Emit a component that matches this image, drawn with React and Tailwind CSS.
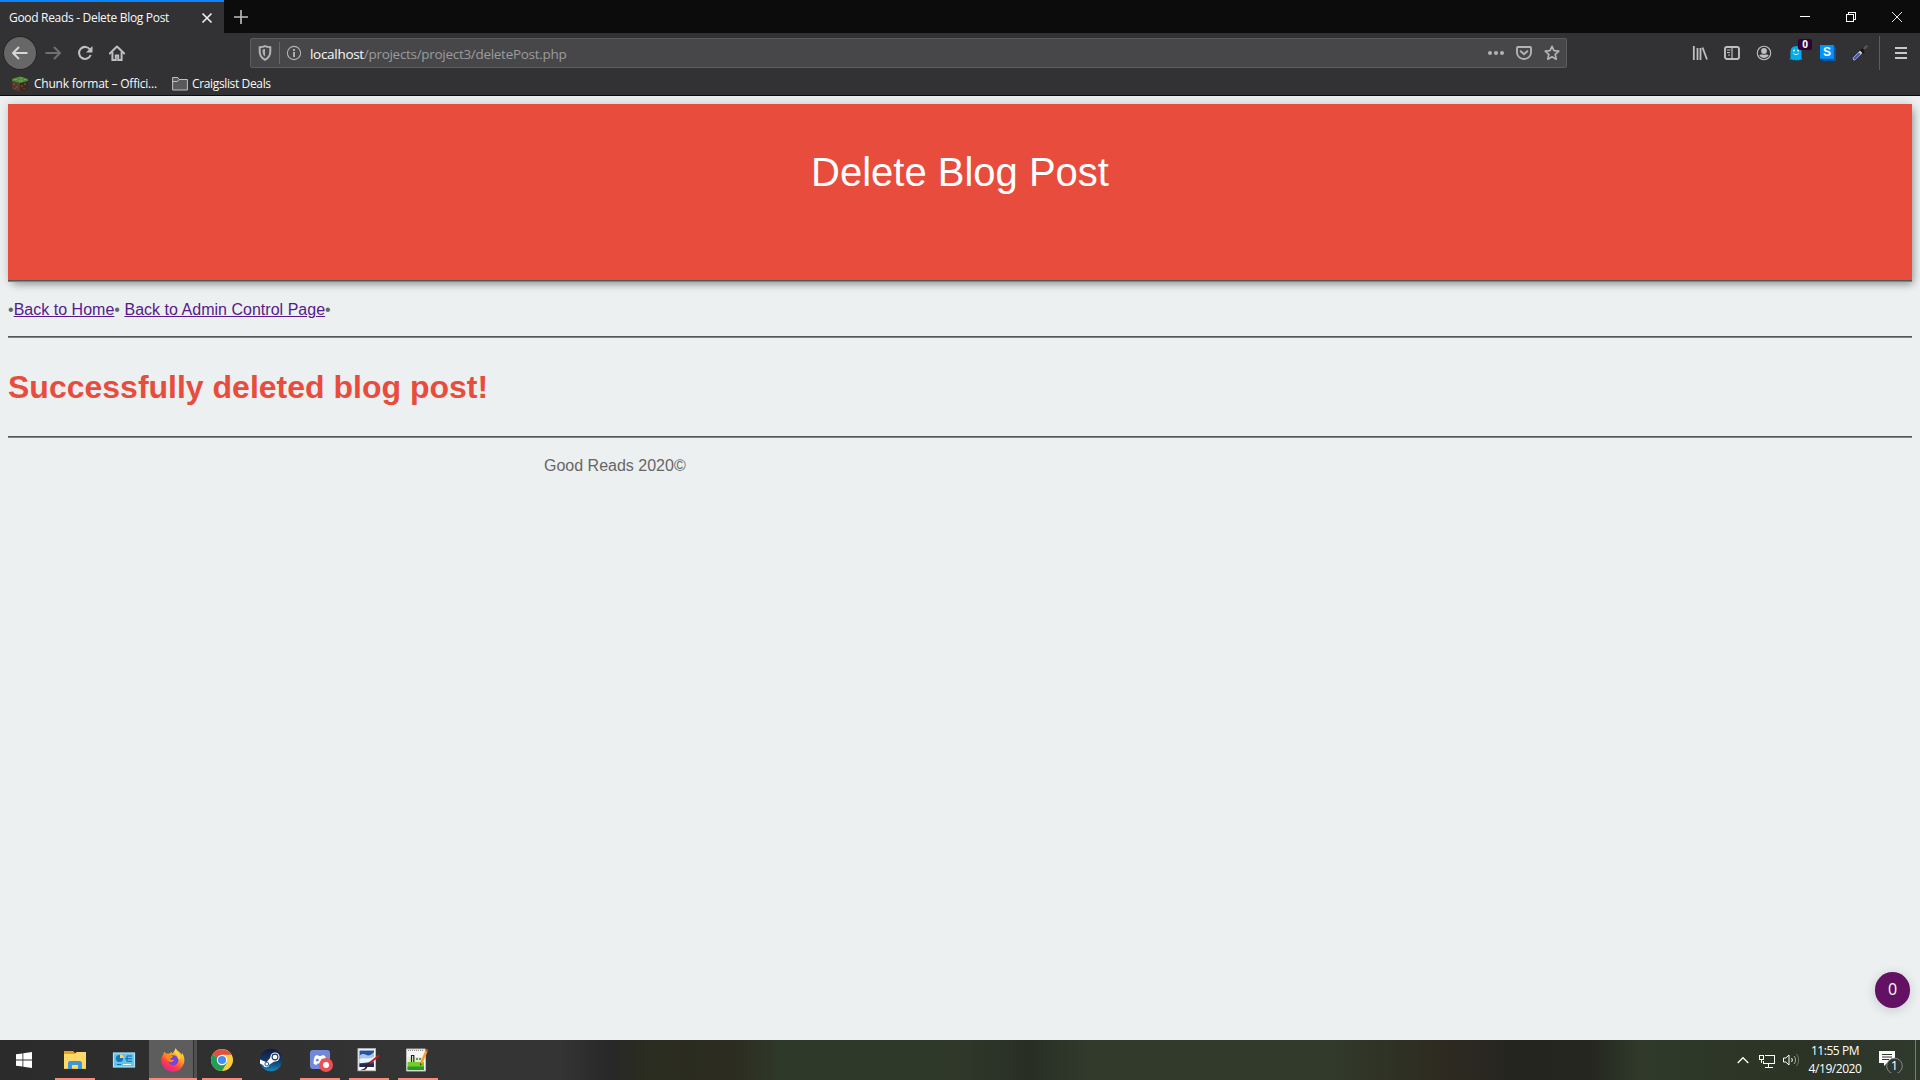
import React from "react";

const Svg = ({ size = 16, className = "", children, ...rest }) => (
  <svg width={size} height={size} viewBox="0 0 16 16" fill="none" className={`block shrink-0 ${className}`} {...rest}>
    {children}
  </svg>
);

const Slot = ({ children }) => (
  <div className="flex h-8 w-8 shrink-0 items-center justify-center text-[#bfbfc0]">{children}</div>
);

function TabStrip() {
  return (
    <div className="flex h-[33px] bg-[#0c0c0d]">
      <div className="flex w-[224px] items-center justify-between border-t-2 border-[#0a84ff] bg-[#323234] pr-[11px] pl-[9px]">
        <span className="text-[12px] leading-4 tracking-[-0.31px] whitespace-nowrap text-[#f9f9fa]">Good Reads - Delete Blog Post</span>
        <Svg size={12} className="text-[#f0f0f0]">
          <path d="M2 2l12 12M14 2L2 14" stroke="currentColor" strokeWidth="2.2" />
        </Svg>
      </div>
      <div className="ml-[9px] flex w-4 items-center">
        <Svg className="text-[#c0c0c1]">
          <path d="M8 1v14M1 8h14" stroke="currentColor" strokeWidth="1.6" />
        </Svg>
      </div>
      <div className="ml-auto flex text-white">
        <div className="flex w-[46px] items-center justify-center">
          <div className="h-px w-2.5 bg-white" />
        </div>
        <div className="flex w-[46px] items-center justify-center">
          <svg width="10" height="10" fill="none" stroke="currentColor" shapeRendering="crispEdges" className="block">
            <path d="M.5 2.5h7v7h-7zM2.5 2.5v-2h7v7h-2" />
          </svg>
        </div>
        <div className="flex w-[46px] items-center justify-center">
          <svg width="10" height="10" stroke="currentColor" className="block">
            <path d="M0 0l10 10M10 0L0 10" strokeWidth="0.9" />
          </svg>
        </div>
      </div>
    </div>
  );
}

function UrlBar() {
  return (
    <div className="ml-[117px] flex h-[30px] w-[1317px] items-center rounded-[2px] border border-[#5c5c5e] bg-[#474749] text-[#b3b3b4]">
      <Svg className="ml-[6px]">
        <path d="M8 1.2c2 .9 3.700 1 5.300 1v4.300c0 4-1.800 6.500-5.300 8.300C4.500 13 2.700 10.500 2.700 6.500V2.200c1.600 0 3.300-.1 5.300-1z" stroke="currentColor" strokeWidth="2" />
        <path d="M8 4v7.500C6.300 10.300 5.600 8.800 5.600 6.500V4.600z" fill="currentColor" />
      </Svg>
      <div className="ml-[6px] h-[22px] w-px bg-[#69696b]" />
      <Svg className="ml-[6px]">
        <circle cx="8" cy="8" r="6.600" stroke="currentColor" strokeWidth="1.100" />
        <path d="M8 7v5M8 4v2" stroke="currentColor" strokeWidth="1.900" />
      </Svg>
      <div className="ml-[8px] pt-[2px] text-[13.5px] leading-5 tracking-[-0.3px] whitespace-nowrap text-[#9b9b9c]">
        <span className="text-[#f9f9fa]">localhost</span>/projects/project3/deletePost.php
      </div>
      <div className="mr-[6px] ml-auto flex gap-3">
        <Svg>
          <g fill="currentColor">
            <circle cx="2" cy="8" r="2" />
            <circle cx="8" cy="8" r="2" />
            <circle cx="14" cy="8" r="2" />
          </g>
        </Svg>
        <Svg>
          <path d="M1.900 2h12.200c.5 0 .9.4.9.9v4.600a7 6.500 0 0 1-14 0V2.900c0-.5.4-.9.9-.9z" stroke="currentColor" strokeWidth="1.900" />
          <path d="M4.700 6.200L8 9.300l3.300-3.100" stroke="currentColor" strokeWidth="1.900" strokeLinecap="round" />
        </Svg>
        <Svg>
          <path d="M8 1.300l2 4.400 4.800.5-3.600 3.200 1 4.800L8 11.800l-4.200 2.400 1-4.800L1.200 6.200 6 5.700z" stroke="currentColor" strokeWidth="1.700" strokeLinejoin="round" />
        </Svg>
      </div>
    </div>
  );
}

function NavBar() {
  return (
    <div className="flex h-10 items-center bg-[#323234] pl-1">
      <div className="flex h-8 w-8 items-center justify-center rounded-full bg-[#676768] text-[#d6d6d7] shadow-[0_0_0_1px_#282829]">
        <Svg>
          <path d="M15.500 8H1.500M7 2L1 8l6 6" stroke="currentColor" strokeWidth="2" strokeLinejoin="round" />
        </Svg>
      </div>
      <div className="ml-px flex h-8 w-8 items-center justify-center text-[#707071]">
        <Svg>
          <path d="M.5 8h14M9 2l6 6-6 6" stroke="currentColor" strokeWidth="2" strokeLinejoin="round" />
        </Svg>
      </div>
      <Slot>
        <Svg>
          <path d="M13 4.500A6 6 0 1 0 13.700 10" stroke="currentColor" strokeWidth="2.100" />
          <path d="M15.500 1v6.500H9z" fill="currentColor" />
        </Svg>
      </Slot>
      <Slot>
        <Svg>
          <path d="M.8 8.500L8 1.500l7.200 7" stroke="currentColor" strokeWidth="2" strokeLinejoin="round" strokeLinecap="round" />
          <path d="M3.400 7v7.900h3.400V10.500h2.400v4.400h3.400V7" stroke="currentColor" strokeWidth="2" />
        </Svg>
      </Slot>
      <UrlBar />
      <div className="ml-[117px] flex">
        <Slot>
          <Svg>
            <path d="M1.800 1v14M5.500 3v12M8.500 3v12" stroke="currentColor" strokeWidth="1.800" />
            <path d="M10.500 2.500l4.500 12" stroke="currentColor" strokeWidth="1.800" />
          </Svg>
        </Slot>
        <Slot>
          <Svg>
            <rect x="1" y="2" width="14" height="12" rx="2" stroke="currentColor" strokeWidth="1.900" />
            <path d="M8 2v12M3 5h3.500M3 7.500h3M4 10h2" stroke="currentColor" strokeWidth="1.200" />
          </Svg>
        </Slot>
        <Slot>
          <Svg>
            <circle cx="8" cy="8" r="6.700" stroke="currentColor" strokeWidth="1.100" />
            <circle cx="8" cy="6" r="2.900" fill="currentColor" />
            <path d="M3.300 10.300c1.200-1.200 2-.6 4.700-.6s3.500-.6 4.700.6A5.400 5.400 0 0 1 8 13.200a5.400 5.400 0 0 1-4.700-2.900z" fill="currentColor" />
          </Svg>
        </Slot>
        <Slot>
          <div className="relative">
            <Svg>
              <path d="M2.500 13V6.500a5.500 5.500 0 0 1 11 0V13l.8 1.700-2.300-.4-1.200 1.200-1.300-1L8 15.700l-1.500-1.200-1.300 1L4 14.300l-2.300.4z" fill="#00aef0" />
              <circle cx="6" cy="5.500" r="1" fill="white" />
              <circle cx="10" cy="5.500" r="1" fill="white" />
              <path d="M5.300 8.200c1 1.800 4.400 1.800 5.400 0" stroke="white" strokeWidth="0.9" />
            </Svg>
            <div className="absolute -top-[6px] left-[10px] flex h-[11px] w-[14px] items-center justify-center rounded-[2px] bg-[#330033] text-[10px] leading-[11px] font-bold text-white">0</div>
          </div>
        </Slot>
        <Slot>
          <Svg>
            <path d="M0 0h13.500L16 2.500V16H2.500L0 13.500z" fill="#00569e" />
            <rect width="13.800" height="13.800" fill="#0094ff" />
            <text x="6.900" y="11" textAnchor="middle" fontFamily="Liberation Sans" fontWeight="bold" fontSize="12" fill="white">S</text>
          </Svg>
        </Slot>
        <Slot>
          <Svg>
            <path d="M2.300 13.700L9 7" stroke="#c4c8d8" strokeWidth="3.200" strokeLinecap="round" />
            <path d="M2.500 13.500L7 9" stroke="#3656cc" strokeWidth="2.200" strokeLinecap="round" />
            <path d="M8.500 4.500l3.500 3.500M10 6l3-3.500" stroke="#161617" strokeWidth="2.200" />
            <path d="M12.500 3.200L14.500 1.500" stroke="#555" strokeWidth="2.600" strokeLinecap="round" />
          </Svg>
        </Slot>
      </div>
      <div className="ml-[3px] h-[34px] w-px bg-[#5c5c5e]" />
      <div className="ml-[13px] text-[#c8c8c9]">
        <Svg>
          <path d="M2 3h12M2 8h12M2 13h12" stroke="currentColor" strokeWidth="2" />
        </Svg>
      </div>
    </div>
  );
}

function Bookmarks() {
  return (
    <div className="flex h-[23px] items-center border-b border-[#0c0c0d] bg-[#323234] pb-[1px] pl-3 text-[12px] leading-4 whitespace-nowrap text-[#f9f9fa]">
      <Svg>
        <path d="M0 3l8-2.500L16 3v10l-8 3-8-3z" fill="#553a2b" />
        <path d="M8 5.500L16 3v10l-8 3z" fill="#3d291f" />
        <path d="M0 3l8-2.500L16 3v2L8 7 0 5z" fill="#4f8a3c" />
        <path d="M2 3.300h3M8 2h3M7 5h4M12 3.500h2" stroke="#71ac58" />
        <path d="M2 7v2M5 10v2M3 12v1M6 8v1M10 9v2M13 7v2M12 12v1" stroke="#7a5640" strokeWidth="1.200" />
      </Svg>
      <span className="ml-[6px] w-[125px] tracking-[-0.22px]">Chunk format – Offici...</span>
      <Svg className="ml-[13px]">
        <path d="M.6 14V1.500h5.200l1.500 2h8.100V14z" fill="#59595b" stroke="#c0c0c1" />
        <path d="M.6 5.500h4.700l2-2" stroke="#c0c0c1" />
      </Svg>
      <span className="ml-[4px] tracking-[-0.36px]">Craigslist Deals</span>
    </div>
  );
}

const Rule = () => <div className="h-[2px] border-t border-t-[#555657] bg-[#828485]" />;

function WebPage() {
  return (
    <div className="relative h-[944px] overflow-hidden bg-[#ecf0f1] px-2 pt-2 font-['Liberation_Sans',Arial,sans-serif] text-base text-[#666]">
      <header className="h-[178px] bg-[#e84c3d] shadow-[3px_4px_8px_-2px_rgba(0,0,0,0.32),0_0_10px_rgba(0,0,0,0.14)]">
        <div className="flex h-[176px] justify-center pt-[45px]">
          <h1 className="text-[40px] leading-[46px] text-white">Delete Blog Post</h1>
        </div>
        <Rule />
      </header>
      <nav className="mt-[19px] h-[35px] leading-[18px] tracking-[0.02px] whitespace-pre">
        •<a className="text-[#551a8b] underline">Back to Home</a>• <a className="text-[#551a8b] underline">Back to Admin Control Page</a>•
      </nav>
      <Rule />
      <h2 className="mt-[31px] h-[67px] text-[32px] leading-[36px] font-bold text-[#e84c3d]">Successfully deleted blog post!</h2>
      <Rule />
      <footer className="mt-[19px] ml-[536px] leading-[18px]">Good Reads 2020©</footer>
      <div className="absolute top-[876px] left-[1875px] flex h-9 w-[35px] items-center justify-center rounded-full bg-[#631263] pb-[2px] font-['Open_Sans',sans-serif] text-base leading-5 text-white shadow-[0_2px_12px_rgba(0,0,0,0.16)]">0</div>
    </div>
  );
}

const TaskButton = ({ width, left = "", bar = true, active = false, children }) => (
  <div
    className={`relative flex h-10 shrink-0 flex-col items-center pt-[8px] ${width} ${left} ${active ? "bg-[#5d5d5d] shadow-[inset_-3px_0_0_#505050,inset_-4px_0_0_#303030]" : ""}`}
  >
    {children}
    {bar && <div className="absolute bottom-0 left-0 h-[2px] w-full bg-[#f98b74]" />}
  </div>
);

const Icon24 = ({ className = "", children }) => (
  <svg width="24" height="24" viewBox="0 0 24 24" fill="none" className={`block shrink-0 ${className}`}>
    {children}
  </svg>
);

function Taskbar() {
  return (
    <div
      className="flex h-10 font-['Open_Sans',sans-serif] text-white bg-[linear-gradient(90deg,#2b2b2b_0px,#2f2f2f_200px,#343434_400px,#343434_560px,#272827_610px,#2a2d1f_650px,#2d2c21_735px,#2f3929_780px,#2f3929_950px,#292e25_1030px,#313a2b_1090px,#313a2b_1330px,#2e2a20_1445px,#252520_1510px,#25261f_1590px,#303a2b_1640px,#2d3727_1720px,#2b3325_1800px,#303a2c_1920px)]"
    >
      <div className="flex w-12 justify-center pt-[12px]">
        <Svg>
          <path d="M0 2.300L6.500 1.400V7.600H0zM7.300 1.300L16 0v7.600H7.300zM0 8.400h6.500v6.200L0 13.700zM7.300 8.400H16V16l-8.700-1.300z" fill="white" />
        </Svg>
      </div>
      <TaskButton width="w-10" left="ml-[7px]">
        <Icon24>
          <path d="M1 3h9l2 2h11v16H1z" fill="#e8a30e" />
          <path d="M1 6h11l1.500-2H23v16.500H1z" fill="#ffd869" />
          <path d="M5 21v-6.500l1.500-1.500h11l1.500 1.500V21h-4v-4H9v4z" fill="#3a96dd" />
        </Icon24>
      </TaskButton>
      <TaskButton width="w-10" left="ml-[9px]" bar={false}>
        <Icon24>
          <rect x="1.500" y="5" width="21" height="14" fill="#63c3ec" stroke="#a9e4fb" strokeWidth="1.200" />
          <circle cx="7.500" cy="10.500" r="3.600" fill="#1675b8" />
          <path d="M8 10V6.300a4 4 0 0 1 3.700 3.700z" fill="#ffd34d" />
          <path d="M15 8v5.500M15 8h5M13 10.700h7M15 13.300h5M5 16.500h4" stroke="#116ba8" strokeWidth="1.100" />
          <path d="M11 16.500h8" stroke="white" />
        </Icon24>
      </TaskButton>
      <TaskButton width="w-12" left="ml-[5px]" active>
        <svg width="24" height="24" viewBox="0 0 24 24" className="block shrink-0">
          <defs>
            <linearGradient id="fx" x1="0.8" y1="0" x2="0.25" y2="1">
              <stop offset="0" stopColor="#fff14a" />
              <stop offset="0.4" stopColor="#ff9a22" />
              <stop offset="0.7" stopColor="#ff3d47" />
              <stop offset="1" stopColor="#e01fa0" />
            </linearGradient>
          </defs>
          <path d="M14.500 0c1.200 2.800 5 4 6.200 7.200l.3-2.500c2.500 3.500 3.300 8.500 1.300 12.300A11.500 11.500 0 0 1 1 16C-.3 12.500.4 8.500 2.600 5.800L3 3.500l2 2c1.100-.2 2.200-.1 3.300.3.600-1 1.500-1.500 2.700-1.800l-.3 2c2-1.500 3.300-3.700 3.800-6z" fill="url(#fx)" />
          <circle cx="12.300" cy="12.300" r="5.100" fill="#7542e5" />
          <path d="M4.500 7c3-.8 5 .7 7.800 1.500-1 1.500-3 1.200-3.500 3 1.500-.5 3 1 4.700.3-1.500 3-5 2.700-6 1.500C5.500 11.500 5 9 4.500 7z" fill="#ff8a16" />
          <path d="M14 3c2 2 4.500 4 4.500 8" stroke="#ffd83b" strokeWidth="2" fill="none" />
        </svg>
      </TaskButton>
      <TaskButton width="w-10" left="ml-[5px]">
        <Icon24>
          <circle cx="12" cy="12" r="11" fill="#ffcd40" />
          <path d="M12 12L2.500 6.500A11 11 0 0 0 12 23l5-8.500z" fill="#219d58" />
          <path d="M12 12L2.500 6.500A11 11 0 0 1 21.500 6.800H12z" fill="#de5246" />
          <circle cx="12" cy="12" r="5.200" fill="white" />
          <circle cx="12" cy="12" r="4.100" fill="#4a8af4" />
        </Icon24>
      </TaskButton>
      <TaskButton width="w-10" left="ml-[9px]" bar={false}>
        <svg width="24" height="24" viewBox="0 0 24 24" fill="none" className="block shrink-0">
          <defs>
            <linearGradient id="steam" x1="0" y1="0" x2="0" y2="1">
              <stop stopColor="#121a3c" />
              <stop offset="0.55" stopColor="#123b6a" />
              <stop offset="1" stopColor="#1688bd" />
            </linearGradient>
          </defs>
          <circle cx="12" cy="12" r="11.300" fill="url(#steam)" />
          <path d="M1 11.500l6.500 2.700 5-6 4.500 4.300-6.500 4a3.400 3.400 0 0 1-6.500.5L1 15.500z" fill="white" />
          <circle cx="16" cy="9" r="4.600" fill="white" />
          <circle cx="16" cy="9" r="2.900" fill="white" stroke="#16365f" strokeWidth="1.100" />
          <circle cx="7.800" cy="16" r="1.900" stroke="#16457a" strokeWidth="0.900" />
        </svg>
      </TaskButton>
      <TaskButton width="w-10" left="ml-[9px]">
        <Icon24 className="translate-x-px">
          <rect x="1" y="2" width="20" height="19" rx="3" fill="#7289da" />
          <path d="M4.500 15.500c0-3 .7-6 1.500-7.500 1-.8 2-1 3-1l.5 1h3l.5-1c1 0 2 .2 3 1 1 2 1.600 4.500 1.600 7.500-1 1-2 1.300-3.200 1.400l-.9-1.400H8.300l-.9 1.400c-1.200-.1-2.100-.6-2.900-1.400z" fill="white" />
          <circle cx="8.300" cy="12.200" r="1.400" fill="#7289da" />
          <circle cx="13.500" cy="12.200" r="1.400" fill="#7289da" />
          <circle cx="17" cy="17" r="7" fill="#f04f51" />
          <circle cx="17" cy="17" r="3" fill="white" />
        </Icon24>
      </TaskButton>
      <TaskButton width="w-10" left="ml-[9px]">
        <Icon24 className="-translate-x-px">
          <rect x="2" y=".7" width="17.500" height="22" fill="white" stroke="#bdbdbd" />
          <rect x="3.500" y="2.500" width="14.500" height="16.500" fill="#2354a2" />
          <path d="M3.500 8c2-3 5-2 7-1s5 0 7.500-3v9l-14.500 1z" fill="#a8c7e7" />
          <path d="M3.500 11c4-2 8 1 14.500-2v4.500l-14.500 2z" fill="#eef5fa" />
          <path d="M3.500 15.500h14.500v3.500h-14.500z" fill="#182f58" />
          <path d="M4.500 21c3 .5 5-.5 5.500-3l1.500.8c-1 3-4 4.500-7 2.200z" fill="#2a1512" />
          <path d="M10 18.300l5-4.300" stroke="#611" strokeWidth="2" />
          <path d="M13.500 15.300L23 7.500" stroke="#b91e22" strokeWidth="2.100" />
        </Icon24>
      </TaskButton>
      <TaskButton width="w-10" left="ml-[9px]">
        <Icon24 className="-translate-x-px">
          <path d="M1.500 1h19v22h-19z" fill="#f4f4f0" stroke="#bdbdbd" />
          <path d="M2.500 9h16.500v5H2.500z" fill="#dff1c8" />
          <path d="M2.500 14h16.500v8H2.500z" fill="#72ce27" />
          <path d="M2.500 18.500h16.500V22H2.500z" fill="#279b22" />
          <path d="M3 2.500h16" stroke="#888" strokeDasharray="1 1" />
          <path d="M6.500 14V7.500h2.300V14M11 11h2M14 11h2" stroke="#222" strokeWidth="1.200" />
          <path d="M16 15.500L21.500 3" stroke="#efa12b" strokeWidth="2.500" />
          <path d="M21.400 3.200l.9-2" stroke="#d23932" strokeWidth="2.500" />
          <path d="M15 18l.2-3 1.800.9z" fill="#5a3718" />
        </Icon24>
      </TaskButton>
      <div className="ml-auto flex items-center">
        <svg width="12" height="8" fill="none" stroke="white" className="block">
          <path d="M.7 7L6 1.700 11.300 7" strokeWidth="1.300" />
        </svg>
        <svg width="16" height="14" fill="none" stroke="white" shapeRendering="crispEdges" className="mt-[1px] ml-[10px] block">
          <path d="M5.500 1.500h10v8h-11v-3M9.500 9.500v3M5.500 13.500h8M.5 1.500h4v4h-4zM2.500 5.500v3" />
        </svg>
        <svg width="17" height="16" fill="none" stroke="white" className="ml-[8px] block">
          <path d="M.5 6v4h2.300L6 13V3L2.800 6z" />
          <path d="M8.500 6c1 1 1 3 0 4" />
          <path d="M11 4c2 2.300 2 5.700 0 8" stroke="#a8ada5" />
          <path d="M13.500 2c2.800 3.500 2.800 8.500 0 12" stroke="#747b70" />
        </svg>
        <div className="ml-[5px] w-[60px] text-center text-[12px] leading-[18px] tracking-[-0.45px] whitespace-nowrap">
          <div>11:55 PM</div>
          <div>4/19/2020</div>
        </div>
        <div className="relative ml-[14px] h-[26px] w-6">
          <svg width="24" height="26" fill="none" className="block">
            <path d="M0 4h16v12H8l-3 3v-3H0z" fill="white" />
            <path d="M3 7.500h10M3 10h10M3 12.500h7" stroke="#30382b" />
            <circle cx="15.500" cy="19" r="7.800" fill="#303630" stroke="#868a83" />
          </svg>
          <span className="absolute top-[10px] left-[11px] w-[9px] text-center text-[13px] leading-4">1</span>
        </div>
      </div>
      <div className="mr-1 ml-[12px] w-px bg-[#777d73]" />
    </div>
  );
}

export default function App() {
  return (
    <div className="h-[1080px] w-[1920px] overflow-hidden font-['Open_Sans','Noto_Sans',sans-serif]">
      <TabStrip />
      <NavBar />
      <Bookmarks />
      <WebPage />
      <Taskbar />
    </div>
  );
}
